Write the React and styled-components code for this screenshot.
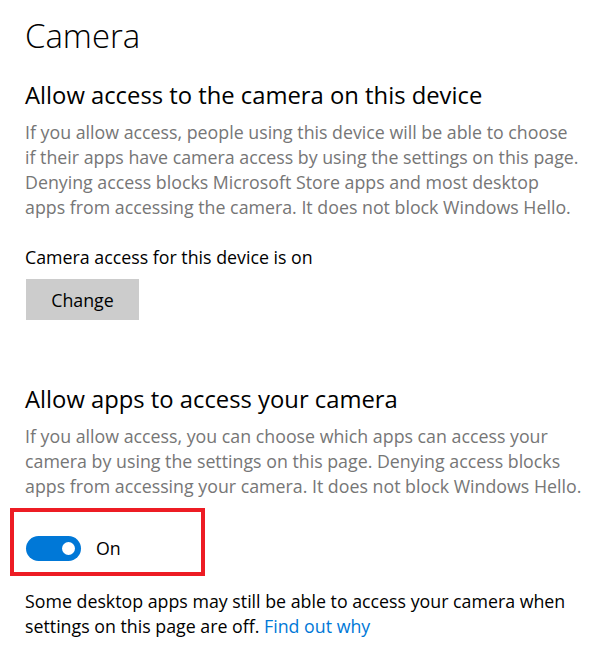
import styled, { createGlobalStyle } from "styled-components";

const GlobalStyle = createGlobalStyle`
  html, body {
    margin: 0;
    padding: 0;
    background: #ffffff;
  }
  body {
    font-family: "Open Sans", "Noto Sans", sans-serif;
    color: #000000;
  }
`;

const Page = styled.div`
  width: 606px;
  height: 667px;
  box-sizing: border-box;
  padding: 12px 0 0 25px;
  overflow: hidden;
`;

const Title = styled.h1`
  margin: 0;
  font-size: 32.9px;
  font-weight: 300;
  line-height: 48px;
`;

const Heading = styled.h2`
  margin: ${(p) => p.$top}px 0 0;
  font-size: 23.8px;
  font-weight: 400;
  line-height: 32px;
`;

const Desc = styled.p`
  margin: 9px 0 0;
  font-size: 17.8px;
  line-height: 25px;
  color: #767676;
  white-space: nowrap;
`;

const Status = styled.p`
  margin: 25px 0 0;
  font-size: 17.8px;
  line-height: 25px;
`;

const Button = styled.button`
  display: block;
  margin: 9px 0 0 1px;
  width: 113px;
  height: 41px;
  border: none;
  background: #cccccc;
  font-family: inherit;
  font-size: 17.8px;
  color: #000;
  padding: 0;
`;

const Highlight = styled.div`
  margin: 9px 0 0 -15px;
  width: 195px;
  box-sizing: border-box;
  border: 4px solid #ed1c24;
  padding: 24px 0 11px 12px;
  display: flex;
  align-items: center;
  gap: 15px;
`;

const Track = styled.span`
  position: relative;
  display: block;
  width: 55px;
  height: 25px;
  border-radius: 13px;
  background: #0078d7;
`;

const Knob = styled.span`
  position: absolute;
  top: 6px;
  right: 6px;
  width: 13px;
  height: 13px;
  border-radius: 50%;
  background: #ffffff;
`;

const ToggleLabel = styled.span`
  font-size: 17.8px;
  line-height: 25px;
`;

const Note = styled.p`
  margin: 13px 0 0;
  font-size: 17.8px;
  line-height: 25px;
  white-space: nowrap;
`;

const Link = styled.a`
  color: #0078d7;
  text-decoration: none;
`;

export default function App() {
  return (
    <>
      <GlobalStyle />
      <Page>
        <Title>Camera</Title>
        <Heading $top={19}>Allow access to the camera on this device</Heading>
        <Desc>
          If you allow access, people using this device will be able to choose
          <br />
          if their apps have camera access by using the settings on this page.
          <br />
          Denying access blocks Microsoft Store apps and most desktop
          <br />
          apps from accessing the camera. It does not block Windows Hello.
        </Desc>
        <Status>Camera access for this device is on</Status>
        <Button>Change</Button>
        <Heading $top={63}>Allow apps to access your camera</Heading>
        <Desc>
          If you allow access, you can choose which apps can access your
          <br />
          camera by using the settings on this page. Denying access blocks
          <br />
          apps from accessing your camera. It does not block Windows Hello.
        </Desc>
        <Highlight>
          <Track>
            <Knob />
          </Track>
          <ToggleLabel>On</ToggleLabel>
        </Highlight>
        <Note>
          Some desktop apps may still be able to access your camera when
          <br />
          settings on this page are off. <Link href="#">Find out why</Link>
        </Note>
      </Page>
    </>
  );
}
